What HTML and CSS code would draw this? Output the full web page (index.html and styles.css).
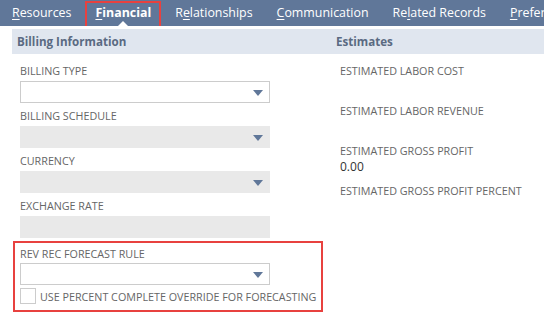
FILE: index.html
```html
<!DOCTYPE html>
<html>
<head>
<meta charset="utf-8">
<link rel="stylesheet" href="styles.css">
</head>
<body>
<nav class="tabs">
  <span class="tab"><u>R</u>esources</span>
  <span class="tab active"><u>F</u>inancial</span>
  <span class="tab">R<u>e</u>lationships</span>
  <span class="tab"><u>C</u>ommunication</span>
  <span class="tab">Re<u>l</u>ated Records</span>
  <span class="tab"><u>P</u>references</span>
</nav>
<main class="content">
  <section class="col left">
    <h2 class="band">Billing Information</h2>
    <div class="fields">
      <div class="field">
        <label class="lbl">BILLING TYPE</label>
        <div class="select"><span class="arrow"></span></div>
      </div>
      <div class="field">
        <label class="lbl">BILLING SCHEDULE</label>
        <div class="select disabled"><span class="arrow"></span></div>
      </div>
      <div class="field">
        <label class="lbl">CURRENCY</label>
        <div class="select disabled"><span class="arrow"></span></div>
      </div>
      <div class="field">
        <label class="lbl">EXCHANGE RATE</label>
        <div class="select disabled"></div>
      </div>
      <div class="highlight">
        <div class="field">
          <label class="lbl">REV REC FORECAST RULE</label>
          <div class="select"><span class="arrow"></span></div>
        </div>
        <div class="check-row">
          <span class="checkbox"></span>
          <span class="check-lbl">USE PERCENT COMPLETE OVERRIDE FOR FORECASTING</span>
        </div>
      </div>
    </div>
  </section>
  <section class="col right">
    <h2 class="band">Estimates</h2>
    <div class="estimates">
      <div class="est"><div class="lbl">ESTIMATED LABOR COST</div><div class="val"></div></div>
      <div class="est"><div class="lbl">ESTIMATED LABOR REVENUE</div><div class="val"></div></div>
      <div class="est"><div class="lbl">ESTIMATED GROSS PROFIT</div><div class="val">0.00</div></div>
      <div class="est"><div class="lbl">ESTIMATED GROSS PROFIT PERCENT</div><div class="val"></div></div>
    </div>
  </section>
</main>
</body>
</html>
```
FILE: styles.css
```css
* { box-sizing: border-box; }
html, body { margin: 0; padding: 0; background: #fff; overflow: hidden; }
body { font-family: "Open Sans", "Liberation Sans", sans-serif; width: 544px; height: 321px; }

.tabs {
  display: flex;
  gap: 24px;
  height: 26px;
  padding-left: 12px;
  background: #607799;
  white-space: nowrap;
  overflow: hidden;
}
.tab {
  color: #fff;
  font-size: 12.4px;
  line-height: 26px;
  position: relative;
  flex-shrink: 0;
}
.tab u { text-decoration-thickness: 1px; text-underline-offset: 2px; }
.tab.active { font-weight: 700; }
.tab.active::after {
  content: "";
  position: absolute;
  left: -10px;
  right: -10px;
  top: 1px;
  height: 27px;
  border: 2px solid #e8413f;
}
.tab.active::before {
  content: "";
  position: absolute;
  left: 50%;
  bottom: 0;
  margin-left: -5px;
  border-left: 5px solid transparent;
  border-right: 5px solid transparent;
  border-bottom: 5px solid #fff;
}

.content {
  display: grid;
  grid-template-columns: 319px 1fr;
  margin: 3px 0 0 12px;
}
.band {
  margin: 0;
  height: 25px;
  background: #e0e6ef;
  color: #5a6a82;
  font-size: 11.6px;
  font-weight: 700;
  line-height: 25px;
  padding-left: 5px;
}
.fields { padding: 10px 0 0 8px; }
.field { margin-bottom: 6px; }
.lbl {
  display: block;
  font-size: 10.75px;
  line-height: 14px;
  color: #666;
  height: 14px;
  white-space: nowrap;
}
.select {
  position: relative;
  margin-top: 3px;
  width: 250px;
  height: 22px;
  border: 1px solid #ccc;
  background: #fff;
}
.select.disabled { border-color: #e9e9e9; background: #e9e9e9; }
.arrow {
  position: absolute;
  right: 6px;
  top: 8px;
  border-left: 5px solid transparent;
  border-right: 5px solid transparent;
  border-top: 6px solid #607799;
}
.highlight {
  margin: -3px 0 0 -7px;
  width: 310px;
  border: 2px solid #e8413f;
  padding: 4px 5px 6px 5px;
}
.highlight .select { margin-top: 2px; }
.highlight .field { margin-bottom: 3px; }
.check-row { display: flex; align-items: flex-end; gap: 4px; white-space: nowrap; }
.checkbox {
  flex-shrink: 0;
  width: 16px;
  height: 16px;
  border: 1px solid #ccc;
  background: #fff;
}
.check-lbl { font-size: 10.75px; line-height: 14px; color: #666; }

.right .band { padding-left: 5px; }
.estimates { padding: 10px 0 0 9px; }
.est { margin-bottom: 8px; }
.val { height: 18px; font-size: 12px; line-height: 18px; color: #333; }
```
